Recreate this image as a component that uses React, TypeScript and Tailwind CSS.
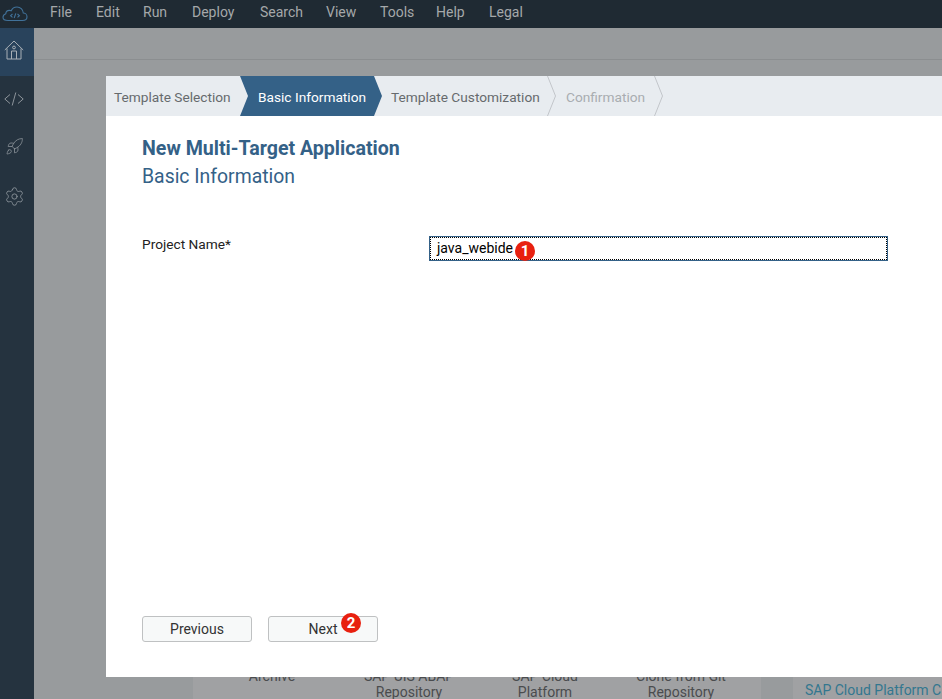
import { Rocket, Settings } from "lucide-react";

const menus = [
  { label: "File", width: "w-[46px]" },
  { label: "Edit", width: "w-[47px]" },
  { label: "Run", width: "w-[49px]" },
  { label: "Deploy", width: "w-[68px]" },
  { label: "Search", width: "w-[66px]" },
  { label: "View", width: "w-[54px]" },
  { label: "Tools", width: "w-[56px]" },
  { label: "Help", width: "w-[53px]" },
  { label: "Legal", width: "w-auto" },
];

function CloudLogo() {
  return (
    <svg width="26" height="16" viewBox="0 0 26 16" fill="none" stroke="#41729a" strokeWidth="1.1">
      <path d="M6 14.5H20.5C23 14.5 25 13 25 10.7C25 8.6 23.3 7 21.3 7C21 3.6 18.3 1 15 1C12.4 1 10.2 2.5 9.2 4.8C8.6 4.5 8 4.4 7.4 4.4C5.4 4.4 3.9 5.8 3.8 7.7C2.1 8.3 1 9.6 1 11.2C1 13.2 3 14.5 6 14.5Z" />
      <path d="M10.5 8L8.6 9.7L10.5 11.4M15.5 8L17.4 9.7L15.5 11.4M13.8 7.4L12.2 12" />
    </svg>
  );
}

function HomeIcon() {
  return (
    <svg width="20" height="20" viewBox="0 0 20 20" fill="none" stroke="#a9b0b6" strokeWidth="1">
      <path d="M0.8 10L10 1L19.2 10" />
      <path d="M3 8.5V19H17V8.5" />
      <circle cx="10" cy="7.5" r="1.4" />
      <path d="M7.5 19V11H12.5V19" />
    </svg>
  );
}

function CodeIcon() {
  return (
    <svg width="20" height="14" viewBox="0 0 20 14" fill="none" stroke="#8d959b" strokeWidth="1">
      <path d="M6 2.5L0.8 7L6 11.5M14 2.5L19.2 7L14 11.5M11.8 0.5L8.2 13.5" />
    </svg>
  );
}

function Badge({ n }: { n: number }) {
  return (
    <span className="flex h-5 w-5 items-center justify-center rounded-full bg-[#e8200f] text-[15px] leading-none font-bold text-white">
      {n}
    </span>
  );
}

function WizardSteps() {
  return (
    <div className="flex h-10 items-stretch bg-[#e8ecf0] text-[13.7px] leading-[42px]">
      <div className="w-[134px] pl-2 text-[#666a6d]">Template Selection</div>
      <div className="w-[142px] bg-[#346187] pl-[18px] text-white [clip-path:polygon(0_0,134px_0,142px_50%,134px_100%,0_100%,8px_50%)]">
        Basic Information
      </div>
      <div className="ml-[9px] w-[156px] text-[#666a6d]">Template Customization</div>
      <svg width="9" height="40" viewBox="0 0 9 40" fill="none" stroke="#c2c6ca">
        <path d="M0.5 0L8.5 20L0.5 40" />
      </svg>
      <div className="ml-[10px] w-[88px] text-[#a9adb0]">Confirmation</div>
      <svg width="9" height="40" viewBox="0 0 9 40" fill="none" stroke="#c2c6ca">
        <path d="M0.5 0L8.5 20L0.5 40" />
      </svg>
    </div>
  );
}

export default function App() {
  return (
    <div className="relative flex h-[699px] w-[942px] flex-col overflow-hidden bg-[#989b9d] font-['Roboto',sans-serif]">
      <header className="flex h-7 shrink-0 items-center bg-[#1f2a33] text-sm text-[#a5a8aa]">
        <div className="flex w-[50px] justify-start pl-[2px]">
          <CloudLogo />
        </div>
        {menus.map((m) => (
          <span key={m.label} className={`${m.width} pb-1`}>
            {m.label}
          </span>
        ))}
      </header>

      <div className="flex min-h-0 flex-1">
        <nav className="flex w-[34px] shrink-0 flex-col bg-[#25333f]">
          <div className="flex h-12 items-center justify-center bg-[#29435c] pr-[6px] pb-1">
            <HomeIcon />
          </div>
          <div className="flex h-[45px] items-center justify-center pr-[6px]">
            <CodeIcon />
          </div>
          <div className="flex h-[51px] items-center justify-center pr-[6px] text-[#8d959b]">
            <Rocket size={19} strokeWidth={1} />
          </div>
          <div className="flex h-[49px] items-center justify-center pr-[6px] text-[#8d959b]">
            <Settings size={21} strokeWidth={1} />
          </div>
        </nav>

        <main className="flex min-w-0 flex-1 flex-col">
          <div className="h-[32px] shrink-0 border-b border-[#8b8e90]" />
          <div className="mt-auto flex h-[33px] shrink-0 items-stretch pl-[159px] text-sm leading-[16px] text-[#4a4c4e]">
            <div className="grid w-[568px] grid-cols-[158px_116px_156px_116px_22px] bg-[#a0a1a3] pt-[2px] text-center">
              <span>Archive</span>
              <span className="whitespace-nowrap">
                SAP UIS ABAP
                <br />
                Repository
              </span>
              <span>
                SAP Cloud
                <br />
                Platform
              </span>
              <span className="whitespace-nowrap">
                Clone from Git
                <br />
                Repository
              </span>
            </div>
            <div className="ml-8 flex-1 bg-[#a0a1a3] pt-[16px] pl-3 whitespace-nowrap text-[#33778f]">SAP Cloud Platform C</div>
          </div>
        </main>
      </div>

      {/* wizard dialog sits over the workspace */}
      <section className="absolute top-[76px] left-[106px] flex h-[601px] w-[836px] flex-col bg-white">
        <WizardSteps />
        <div className="flex flex-1 flex-col pt-5 pl-9">
          <h1 className="text-[19.6px] leading-[26px] font-bold text-[#346187]">New Multi-Target Application</h1>
          <h2 className="mt-[2px] text-[19.4px] leading-[26px] text-[#346187]">Basic Information</h2>

          <div className="mt-[46px] flex items-start">
            <label className="w-[287px] text-[13.7px] leading-[16px] text-[#222]">Project Name*</label>
            <div className="relative h-[25px] w-[459px] border border-[#346187] bg-white">
              <div className="h-full border border-dotted border-black pl-[6px] text-sm leading-[21px] text-black">
                java_webide
              </div>
              <div className="absolute top-[4px] left-[85px]">
                <Badge n={1} />
              </div>
            </div>
          </div>

          <div className="mt-auto mb-[35px] flex gap-4">
            <button className="h-[26px] w-[110px] rounded-[3px] border border-[#bfc1c2] bg-[#f7f9f9] text-sm text-[#333]">
              Previous
            </button>
            <button className="relative h-[26px] w-[110px] rounded-[3px] border border-[#bfc1c2] bg-[#f7f9f9] text-sm text-[#333]">
              Next
              <span className="absolute -top-[4px] left-[72px]">
                <Badge n={2} />
              </span>
            </button>
          </div>
        </div>
      </section>
    </div>
  );
}
